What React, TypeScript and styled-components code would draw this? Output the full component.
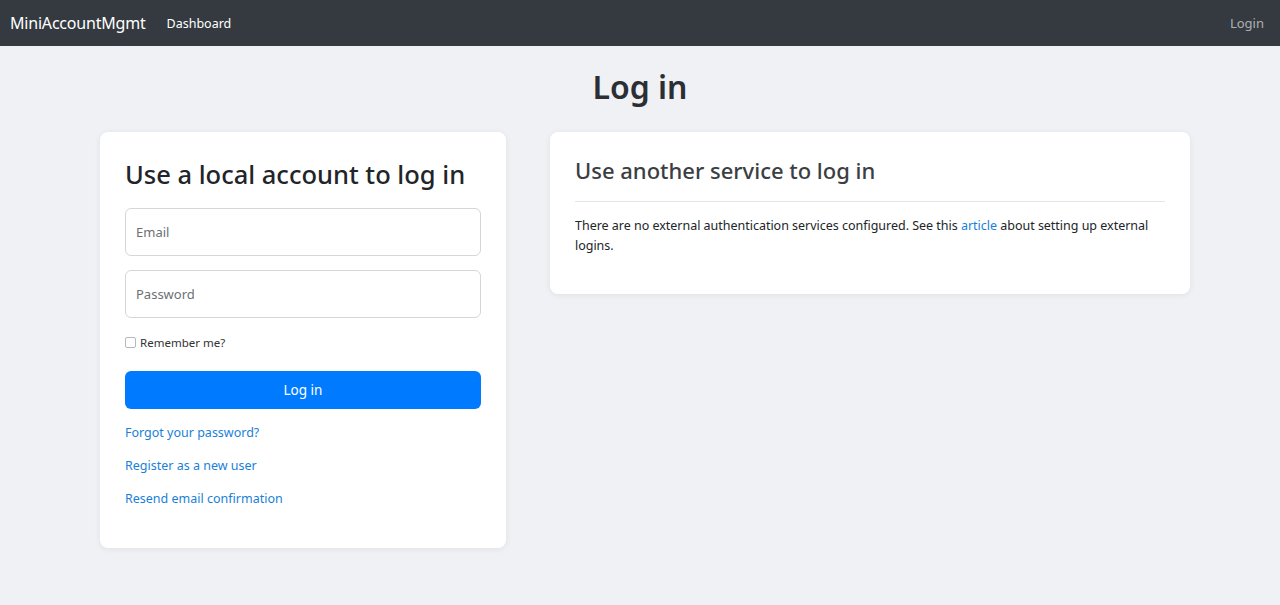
import React from "react";
import styled, { createGlobalStyle } from "styled-components";

const Global = createGlobalStyle`
  html, body { margin: 0; padding: 0; }
  body {
    background: #f0f1f5;
    font-family: "Noto Sans", "Open Sans", sans-serif;
    color: #212529;
  }
  * { box-sizing: border-box; }
`;

const Page = styled.div`
  min-height: 605px;
  background: #f0f1f5;
`;

const Navbar = styled.nav`
  height: 46px;
  background: #343a40;
  display: flex;
  align-items: center;
  padding: 0 16px 0 10px;
`;

const Brand = styled.a`
  color: #fff;
  font-size: 16px;
  text-decoration: none;
  margin-right: 21px;
  letter-spacing: -0.2px;
`;

const NavLink = styled.a<{ $muted?: boolean }>`
  color: ${(p) => (p.$muted ? "rgba(255,255,255,0.6)" : "#fff")};
  font-size: ${(p) => (p.$muted ? "13px" : "12.5px")};
  text-decoration: none;
`;

const Spacer = styled.div`
  flex: 1;
`;

const Main = styled.main`
  display: flex;
  flex-direction: column;
`;

const Title = styled.h1`
  margin: 0;
  padding-top: 20px;
  height: 86px;
  text-align: center;
  font-size: 32px;
  font-weight: 600;
  color: #2b2f33;
  line-height: 42px;
`;

const Columns = styled.div`
  display: grid;
  grid-template-columns: 406px 640px;
  gap: 44px;
  align-items: start;
  padding-left: 100px;
`;

const Card = styled.section<{ $pt: number; $pb: number }>`
  background: #fff;
  border-radius: 8px;
  box-shadow: 0 1px 6px rgba(0, 0, 0, 0.07);
  padding: ${(p) => p.$pt}px 25px ${(p) => p.$pb}px;
`;

const CardTitle = styled.h2`
  margin: 0 0 16px;
  font-size: 25.5px;
  font-weight: 500;
  line-height: 36px;
  color: #212529;
`;

const SubTitle = styled.h3`
  margin: 0;
  font-size: 22px;
  font-weight: 500;
  line-height: 32px;
  color: #3b3e42;
`;

const Form = styled.form`
  display: flex;
  flex-direction: column;
`;

const Input = styled.input`
  height: 48px;
  width: 100%;
  border: 1px solid #d3d6da;
  border-radius: 6px;
  padding: 0 10px;
  font-family: inherit;
  font-size: 13px;
  color: #212529;
  margin-bottom: 14px;
  &::placeholder { color: #6c7075; }
`;

const CheckRow = styled.label`
  display: flex;
  align-items: center;
  gap: 4px;
  font-size: 11.5px;
  color: #333;
  margin: 3px 0 21px;
`;

const Check = styled.span`
  width: 11px;
  height: 11px;
  border: 1px solid #b5b8bc;
  border-radius: 2px;
  background: #fff;
`;

const Button = styled.button`
  height: 38px;
  width: 100%;
  background: #007bff;
  border: none;
  border-radius: 6px;
  color: #fff;
  font-family: inherit;
  font-size: 13.5px;
  margin-bottom: 14px;
`;

const Links = styled.div`
  display: flex;
  flex-direction: column;
  gap: 14px;
`;

const Link = styled.a`
  color: #1a7fd8;
  font-size: 12.5px;
  line-height: 19px;
  text-decoration: none;
`;

const InlineLink = styled.a`
  color: #1a7fd8;
  text-decoration: none;
`;

const Rule = styled.hr`
  border: none;
  border-top: 1px solid #e2e4e7;
  margin: 15px 0 14px;
`;

const Para = styled.p`
  margin: 0;
  font-size: 12.5px;
  letter-spacing: -0.02px;
  line-height: 20px;
  color: #212529;
`;

export default function App() {
  return (
    <Page>
      <Global />
      <Navbar>
        <Brand href="#">MiniAccountMgmt</Brand>
        <NavLink href="#">Dashboard</NavLink>
        <Spacer />
        <NavLink href="#" $muted>Login</NavLink>
      </Navbar>
      <Main>
        <Title>Log in</Title>
        <Columns>
          <Card $pt={24} $pb={40}>
            <CardTitle>Use a local account to log in</CardTitle>
            <Form>
              <Input placeholder="Email" />
              <Input placeholder="Password" type="password" />
              <CheckRow>
                <Check />
                Remember me?
              </CheckRow>
              <Button type="button">Log in</Button>
              <Links>
                <Link href="#">Forgot your password?</Link>
                <Link href="#">Register as a new user</Link>
                <Link href="#">Resend email confirmation</Link>
              </Links>
            </Form>
          </Card>
          <Card $pt={22} $pb={38}>
            <SubTitle>Use another service to log in</SubTitle>
            <Rule />
            <Para>
              There are no external authentication services configured. See this{" "}
              <InlineLink href="#">article</InlineLink> about setting up external logins.
            </Para>
          </Card>
        </Columns>
      </Main>
    </Page>
  );
}
